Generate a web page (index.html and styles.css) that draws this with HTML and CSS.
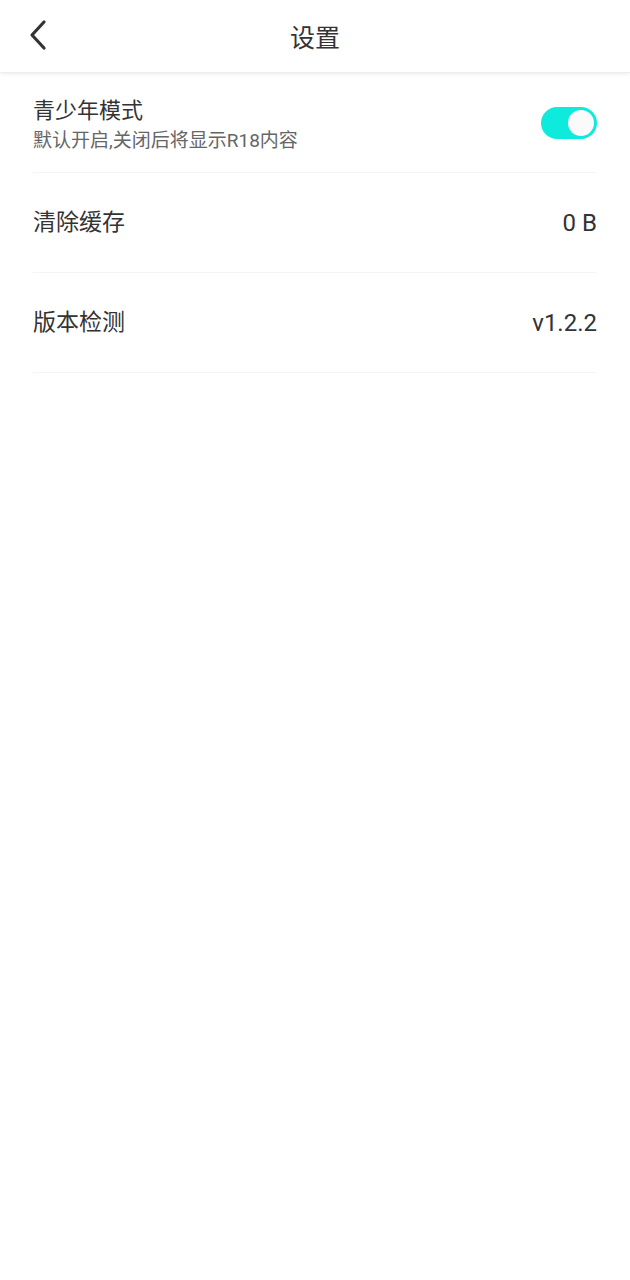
FILE: index.html
```html
<!DOCTYPE html>
<html lang="zh-CN">
  <head>
    <meta charset="UTF-8" />
    <meta name="viewport" content="width=device-width, initial-scale=1.0" />
    <title>设置</title>
    <link rel="stylesheet" href="styles.css">
  </head>
  <body>
    <!-- Top bar -->
    <div class="header">
      <a class="back-btn" href="#">
        <svg width="20" height="32" viewBox="0 0 20 32">
          <path d="M16 3 L4 16 L16 29" fill="none" stroke="#333" stroke-width="3.2" stroke-linecap="round" stroke-linejoin="round" />
        </svg>
      </a>
      <h1 class="header-title">设置</h1>
    </div>

    <!-- Settings list -->
    <div class="settings-list">
      <div class="setting-item">
        <div class="setting-info">
          <div class="setting-title">青少年模式</div>
          <div class="setting-desc">默认开启,关闭后将显示R18内容</div>
        </div>
        <div class="switch on"><span class="switch-knob"></span></div>
      </div>
      <div class="setting-item">
        <div class="setting-title big">清除缓存</div>
        <div class="setting-value">0 B</div>
      </div>
      <div class="setting-item">
        <div class="setting-title big">版本检测</div>
        <div class="setting-value">v1.2.2</div>
      </div>
    </div>
  </body>
</html>
```

FILE: styles.css
```css
body {
  font-family: Roboto, "Noto Sans CJK SC", sans-serif;
  margin: 0;
  background-color: #fff;
  color: #333;
}

.header {
  position: relative;
  height: 72px;
  display: flex;
  align-items: center;
  justify-content: center;
  background: #fff;
  box-shadow: 0 1px 4px rgba(0, 0, 0, 0.08);
  border-bottom: 1px solid #ededed;
}

.back-btn {
  position: absolute;
  left: 28px;
  top: 19px;
  display: flex;
}

.header-title {
  margin: 0;
  font-size: 25px;
  font-weight: normal;
  color: #333;
}

.settings-list {
  padding: 0 33px;
}

.setting-item {
  height: 99px;
  display: flex;
  justify-content: space-between;
  align-items: center;
  border-bottom: 1px solid #f4f4f4;
}

.setting-info {
  padding-top: 6px;
}

.setting-title {
  font-size: 22px;
  line-height: 30px;
  color: #333;
}
.setting-title.big {
  font-size: 23px;
}

.setting-desc {
  font-size: 19px;
  line-height: 30px;
  color: #666;
}

.setting-value {
  font-size: 24px;
  color: #333;
}

/* Toggle */
.switch {
  width: 56px;
  height: 32px;
  border-radius: 16px;
  background: #e0e0e0;
  display: flex;
  align-items: center;
  padding: 0 3px;
  box-sizing: border-box;
}
.switch.on {
  background: #0eeadb;
  justify-content: flex-end;
}
.switch-knob {
  width: 26px;
  height: 26px;
  border-radius: 50%;
  background: #fafafa;
}
```
